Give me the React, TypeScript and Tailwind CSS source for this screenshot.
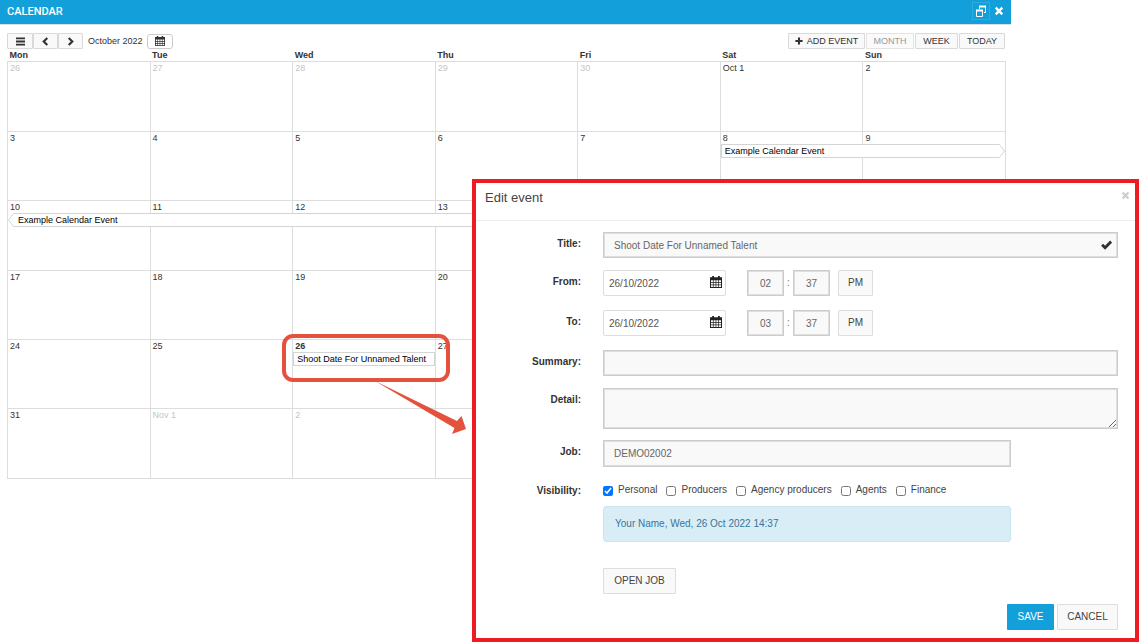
import { useState } from 'react';
import type { ReactNode } from 'react';

type CalendarEvent = { title: string; shape: 'single' | 'start' | 'end' };
type Day = { label: string; muted?: boolean; today?: boolean; event?: CalendarEvent };

const toolbarButtonClasses =
  'h-4 flex items-center justify-center gap-1 rounded-[1px] border border-[#d9d9d9] bg-[#f9f9f9] text-[#333] cursor-pointer';
const fieldClasses =
  'border border-[#ccc] bg-[#f9f9f9] text-[#666] shadow-[inset_0_0_0_1px_#dedede] outline-none focus:border-[#129fda]';
const dateClasses = 'h-[26px] w-full rounded-xs border border-[#ddd] bg-white pl-[5px] pr-5 text-[#555] outline-none';
const modalButtonClasses = 'h-[26px] border border-[#ddd] bg-[#f9f9f9] text-[#444] cursor-pointer';

const weekdays = ['Mon', 'Tue', 'Wed', 'Thu', 'Fri', 'Sat', 'Sun'];

const weeks: { height: string; days: Day[] }[] = [
  {
    height: 'h-[70px]',
    days: [
      { label: '26', muted: true },
      { label: '27', muted: true },
      { label: '28', muted: true },
      { label: '29', muted: true },
      { label: '30', muted: true },
      { label: 'Oct 1' },
      { label: '2' },
    ],
  },
  {
    height: 'h-[69px]',
    days: [
      { label: '3' },
      { label: '4' },
      { label: '5' },
      { label: '6' },
      { label: '7' },
      { label: '8', event: { title: 'Example Calendar Event', shape: 'start' } },
      { label: '9' },
    ],
  },
  {
    height: 'h-[70px]',
    days: [
      { label: '10', event: { title: 'Example Calendar Event', shape: 'end' } },
      { label: '11' },
      { label: '12' },
      { label: '13' },
      { label: '14' },
      { label: '15' },
      { label: '16' },
    ],
  },
  {
    height: 'h-[69px]',
    days: [
      { label: '17' },
      { label: '18' },
      { label: '19' },
      { label: '20' },
      { label: '21' },
      { label: '22' },
      { label: '23' },
    ],
  },
  {
    height: 'h-[69px]',
    days: [
      { label: '24' },
      { label: '25' },
      { label: '26', today: true, event: { title: 'Shoot Date For Unnamed Talent', shape: 'single' } },
      { label: '27' },
      { label: '28' },
      { label: '29' },
      { label: '30' },
    ],
  },
  {
    height: 'h-[70px]',
    days: [
      { label: '31' },
      { label: 'Nov 1', muted: true },
      { label: '2', muted: true },
      { label: '' },
      { label: '' },
      { label: '' },
      { label: '' },
    ],
  },
];

// heavy square-ended glyphs, all on a 10x10 box
const strokes = {
  bars: 'M0 1.5h10M0 5h10M0 8.5h10',
  left: 'M7 1L3 5l4 4',
  right: 'M3 1l4 4-4 4',
  plus: 'M5 .5v9M.5 5h9',
  times: 'M1.7 1.7l6.6 6.6M8.3 1.7L1.7 8.3',
  check: 'M1 5.2l2.7 2.7L9.2 2.3',
};

function Icon({ name, className, weight = 2 }: { name: keyof typeof strokes; className: string; weight?: number }) {
  return (
    <svg viewBox="0 0 10 10" className={className} fill="none" stroke="currentColor" strokeWidth={weight} aria-hidden="true">
      <path d={strokes[name]} />
    </svg>
  );
}

function CalendarIcon({ className }: { className: string }) {
  return (
    <svg viewBox="0 0 12 12" className={className} aria-hidden="true">
      <path
        fill="currentColor"
        fillRule="evenodd"
        d="M2.2 0h1.8v1.2h4V0h1.8v1.2H12V12H0V1.2h2.2zM1 4.2v1.9h1.9V4.2zm2.6 0v1.9h2V4.2zm2.7 0v1.9h2V4.2zm2.7 0v1.9h2V4.2zM1 6.8v1.7h1.9V6.8zm2.6 0v1.7h2V6.8zm2.7 0v1.7h2V6.8zm2.7 0v1.7h2V6.8zM1 9.2v1.9h1.9V9.2zm2.6 0v1.9h2V9.2zm2.7 0v1.9h2V9.2zm2.7 0v1.9h2V9.2z"
      />
    </svg>
  );
}

function EventBar({ event }: { event: CalendarEvent }) {
  if (event.shape === 'start') {
    return (
      <a href="#event" className="relative z-10 flex h-[14px] w-[calc(200%+1px)] text-black">
        <span className="flex-1 border border-r-0 border-[#d4d4d4] bg-white pl-[3px] leading-3">{event.title}</span>
        <svg viewBox="0 0 6 14" className="h-[14px] w-[6px] shrink-0" fill="white" stroke="#d4d4d4">
          <path d="M0 .5h.5l5 6.5-5 6.5H0" />
        </svg>
      </a>
    );
  }
  if (event.shape === 'end') {
    return (
      <a href="#event" className="relative z-10 flex h-[14px] w-[700%] text-black">
        <svg viewBox="0 0 6 14" className="h-[14px] w-[6px] shrink-0" fill="white" stroke="#d4d4d4">
          <path d="M6 .5h-.5L.5 7l5 6.5H6" />
        </svg>
        <span className="flex-1 border border-l-0 border-[#d4d4d4] bg-white pl-1 leading-3">{event.title}</span>
      </a>
    );
  }
  return (
    <a
      href="#event"
      className="relative z-10 block h-[14px] border border-[#d4d4d4] bg-white pl-[3px] leading-3 whitespace-nowrap text-black"
    >
      {event.title}
    </a>
  );
}

function CalendarPanel() {
  return (
    <section className="mr-[135px]">
      <header className="flex h-6 items-center justify-between bg-[#129fda] pr-1.5 pl-[7px] text-white shadow-[0_1px_0_#ddd]">
        <h1 className="font-['Roboto',sans-serif] text-[11px] font-medium">CALENDAR</h1>
        <div className="flex items-center gap-[3px] pb-[3px]">
          <button
            type="button"
            aria-label="Restore window"
            className="flex size-[18px] items-center justify-center border border-[#30abdf] cursor-pointer"
          >
            <svg viewBox="0 0 12 12" className="size-3" fill="none" stroke="currentColor">
              <path d="M4 1.5h7M1 5.5h7" strokeWidth="2" />
              <path d="M4.5 4V2M10.5 2v5.5H9M1.5 5v6.5h6V5" />
            </svg>
          </button>
          <button type="button" aria-label="Close calendar" className="flex size-3 items-center justify-center cursor-pointer">
            <Icon name="times" className="size-[10px]" weight={2.4} />
          </button>
        </div>
      </header>

      <div className="pt-[9px] pr-[5px] pl-[7px] text-[9px]">
        <div className="flex items-center justify-between pr-px">
          <div className="flex items-center">
            <button type="button" aria-label="Menu" className={`${toolbarButtonClasses} w-[26px]`}>
              <Icon name="bars" className="size-[9px]" />
            </button>
            <button type="button" aria-label="Previous month" className={`${toolbarButtonClasses} w-[25px]`}>
              <Icon name="left" className="size-[9px]" weight={2.4} />
            </button>
            <button type="button" aria-label="Next month" className={`${toolbarButtonClasses} w-[25px]`}>
              <Icon name="right" className="size-[9px]" weight={2.4} />
            </button>
            <span className="ml-[5px] text-[#333]">October 2022</span>
            <button
              type="button"
              aria-label="Pick a date"
              className="ml-1 flex h-[15px] w-[26px] items-center justify-center rounded-[3px] border border-[#ccc] bg-white text-[#333] cursor-pointer"
            >
              <CalendarIcon className="size-[10px]" />
            </button>
          </div>
          <div className="flex gap-px">
            <button type="button" className={`${toolbarButtonClasses} w-[77px]`}>
              <Icon name="plus" className="size-2" weight={2.6} />
              ADD EVENT
            </button>
            <button
              type="button"
              disabled
              className="flex h-4 w-12 items-center justify-center border border-[#e3e3e3] bg-[#fbfbfb] text-[#999]"
            >
              MONTH
            </button>
            <button type="button" className={`${toolbarButtonClasses} w-[43px]`}>
              WEEK
            </button>
            <button type="button" className={`${toolbarButtonClasses} w-[46px]`}>
              TODAY
            </button>
          </div>
        </div>

        <table className="w-full table-fixed border-collapse text-[#333]">
          <thead>
            <tr className="h-3">
              {weekdays.map((name) => (
                <th key={name} className="p-0 pl-0.5 text-left leading-3 font-bold">
                  {name}
                </th>
              ))}
            </tr>
          </thead>
          <tbody>
            {weeks.map((week, row) => (
              <tr key={row} className={week.height}>
                {week.days.map((day, column) => (
                  <td key={column} className="border border-[#ddd] p-0 align-top">
                    <div
                      className={`h-3 pl-0.5 leading-[13px] ${day.muted ? 'text-[#c4c4c4]' : ''} ${day.today ? 'font-bold' : ''}`}
                    >
                      {day.label}
                    </div>
                    {day.event && <EventBar event={day.event} />}
                  </td>
                ))}
              </tr>
            ))}
          </tbody>
        </table>
      </div>
    </section>
  );
}

function FormRow({ label, id, className, children }: { label: string; id: string; className: string; children: ReactNode }) {
  return (
    <div className={`flex gap-[22px] ${className}`}>
      <label htmlFor={id} className="w-[105px] shrink-0 pt-[5px] text-right leading-[14px] font-bold text-[#333]">
        {label}:
      </label>
      <div className="min-w-0 flex-1">{children}</div>
    </div>
  );
}

function DateTimeFields({ id, hour, minute }: { id: string; hour: string; minute: string }) {
  return (
    <div className="flex items-center">
      <div className="relative w-[123px]">
        <input id={id} type="text" defaultValue="26/10/2022" className={dateClasses} />
        <CalendarIcon className="pointer-events-none absolute top-1.5 right-1 size-3 text-[#222]" />
      </div>
      <input
        type="text"
        aria-label={`${id} hour`}
        defaultValue={hour}
        className={`ml-[21px] h-[26px] w-[37px] text-center ${fieldClasses}`}
      />
      <span className="w-[9px] text-center text-[#777]">:</span>
      <input
        type="text"
        aria-label={`${id} minute`}
        defaultValue={minute}
        className={`h-[26px] w-[37px] text-center ${fieldClasses}`}
      />
      <button type="button" className={`ml-2 w-[35px] rounded-[1px] ${modalButtonClasses}`}>
        PM
      </button>
    </div>
  );
}

function EditEventModal() {
  const [visibility, setVisibility] = useState<string[]>(['Personal']);

  const toggle = (name: string) => {
    setVisibility((list) => (list.includes(name) ? list.filter((n) => n !== name) : [...list, name]));
  };

  return (
    <div
      role="dialog"
      aria-labelledby="edit-event-title"
      className="absolute top-[179px] right-[7px] left-[472px] z-30 border-4 border-[#ed1c24] bg-white text-[10px]"
    >
      <div className="flex h-[38px] items-start justify-between border-b border-[#eee] pt-[7px] pr-[5px] pl-[9px]">
        <h2 id="edit-event-title" className="text-[13px] leading-4 text-[#444]">
          Edit event
        </h2>
        <button type="button" aria-label="Close" className="mt-px text-[#ccc] cursor-pointer">
          <Icon name="times" className="size-[9px]" weight={2.4} />
        </button>
      </div>

      <form className="pt-[11px] pr-[17px] pb-2" onSubmit={(e) => e.preventDefault()}>
        <FormRow label="Title" id="title" className="mb-3">
          <div className="relative">
            <input
              id="title"
              type="text"
              defaultValue="Shoot Date For Unnamed Talent"
              className={`block h-[26px] w-full pr-6 pl-[10px] ${fieldClasses}`}
            />
            <Icon
              name="check"
              className="pointer-events-none absolute top-[7px] right-1.5 size-[11px] text-[#333]"
              weight={2.6}
            />
          </div>
        </FormRow>
        <FormRow label="From" id="from" className="mb-[14px]">
          <DateTimeFields id="from" hour="02" minute="37" />
        </FormRow>
        <FormRow label="To" id="to" className="mb-[14px]">
          <DateTimeFields id="to" hour="03" minute="37" />
        </FormRow>
        <FormRow label="Summary" id="summary" className="mb-3">
          <input id="summary" type="text" className={`block h-[26px] w-full px-[10px] ${fieldClasses}`} />
        </FormRow>
        <FormRow label="Detail" id="detail" className="mb-[11px]">
          <textarea id="detail" className={`block h-[41px] w-full resize px-[10px] ${fieldClasses}`} />
        </FormRow>
        <FormRow label="Job" id="job" className="mb-3">
          <input
            id="job"
            type="text"
            defaultValue="DEMO02002"
            className={`block h-[27px] w-full max-w-[408px] px-[10px] ${fieldClasses}`}
          />
        </FormRow>
        <FormRow label="Visibility" id="visibility-personal" className="mb-2">
          <div className="flex gap-[9px] pt-1 leading-[14px] text-[#444]">
            {['Personal', 'Producers', 'Agency producers', 'Agents', 'Finance'].map((name) => (
              <label key={name} className="flex gap-[5px] whitespace-nowrap">
                <input
                  id={`visibility-${name.toLowerCase().replace(' ', '-')}`}
                  type="checkbox"
                  checked={visibility.includes(name)}
                  onChange={() => toggle(name)}
                  className="mt-[3px] size-[10px]"
                />
                {name}
              </label>
            ))}
          </div>
        </FormRow>

        <div className="pl-[127px]">
          <p className="flex h-9 w-full max-w-[408px] items-center rounded-[3px] border border-[#c9e6f0] bg-[#d9edf7] pl-[11px] text-[#3a7596]">
            Your Name, Wed, 26 Oct 2022 14:37
          </p>
          <button type="button" className={`mt-[26px] w-[73px] rounded-[1px] ${modalButtonClasses}`}>
            OPEN JOB
          </button>
        </div>

        <div className="mt-[10px] flex justify-end gap-[3px]">
          <button type="submit" className="h-[26px] w-[47px] rounded-[1px] bg-[#129fda] text-white cursor-pointer">
            SAVE
          </button>
          <button type="button" className={`w-[61px] rounded-[1px] ${modalButtonClasses}`}>
            CANCEL
          </button>
        </div>
      </form>
    </div>
  );
}

function Callout() {
  return (
    <svg
      viewBox="0 0 188 104"
      className="pointer-events-none absolute top-[332px] left-[280px] z-20 h-[104px] w-[188px]"
      aria-hidden="true"
    >
      <rect x="4" y="4" width="164" height="44" rx="9" fill="none" stroke="#e4513c" strokeWidth="4" />
      <path d="M95 49L175 89L182 84L186 97L172 102L174 96z" fill="none" />
      <path d="M95 49L177 89L181.500 84L186 97L172 102L174.500 96z" fill="#e4513c" />
    </svg>
  );
}

export default function App() {
  return (
    <main className="relative min-h-screen bg-white font-['Liberation_Sans',Arial,sans-serif] leading-[1.2]">
      <CalendarPanel />
      <Callout />
      <EditEventModal />
    </main>
  );
}
